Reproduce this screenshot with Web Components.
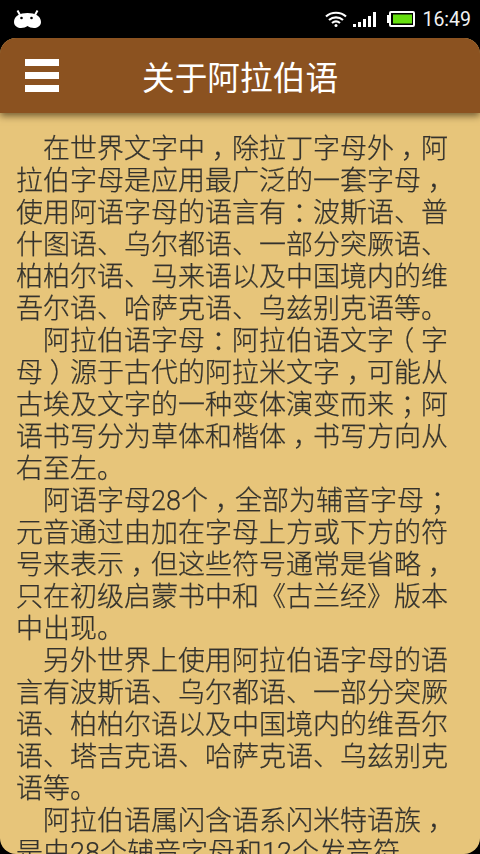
<!DOCTYPE html>
<html lang="zh-CN">
<head>
<meta charset="utf-8">
<style>
  html, body { margin: 0; height: 100%; background: #000; overflow: hidden; }
</style>
</head>
<body>
<about-page>
  <status-bar slot="status" time="16:49"></status-bar>
  <title-bar slot="title">关于阿拉伯语</title-bar>
  <text-para>在世界文字中，除拉丁字母外，阿
拉伯字母是应用最广泛的一套字母，
使用阿语字母的语言有：波斯语、普
什图语、乌尔都语、一部分突厥语、
柏柏尔语、马来语以及中国境内的维
吾尔语、哈萨克语、乌兹别克语等。</text-para>
  <text-para>阿拉伯语字母：阿拉伯语文字（字
母）源于古代的阿拉米文字，可能从
古埃及文字的一种变体演变而来；阿
语书写分为草体和楷体，书写方向从
右至左。</text-para>
  <text-para>阿语字母28个，全部为辅音字母；
元音通过由加在字母上方或下方的符
号来表示，但这些符号通常是省略，
只在初级启蒙书中和《古兰经》版本
中出现。</text-para>
  <text-para>另外世界上使用阿拉伯语字母的语
言有波斯语、乌尔都语、一部分突厥
语、柏柏尔语以及中国境内的维吾尔
语、塔吉克语、哈萨克语、乌兹别克
语等。</text-para>
  <text-para>阿拉伯语属闪含语系闪米特语族，
是由28个辅音字母和12个发音符</text-para>
</about-page>
<script>
  class AboutPage extends HTMLElement {
    constructor() {
      super();
      this.attachShadow({ mode: 'open' }).innerHTML = `
        <style>
          :host { display: flex; flex-direction: column; height: 854px; background: #000; }
          .card { flex: 1; min-height: 0; display: flex; flex-direction: column; overflow: hidden;
            background: #e7c57a; border-radius: 16px; }
          .body { flex: 1; min-height: 0; overflow: hidden; padding: 20px 12px 0 16px; }
        </style>
        <slot name="status"></slot>
        <div class="card">
          <slot name="title"></slot>
          <div class="body"><slot></slot></div>
        </div>`;
    }
  }

  class StatusBar extends HTMLElement {
    constructor() {
      super();
      this.attachShadow({ mode: 'open' }).innerHTML = `
        <style>
          :host { display: flex; align-items: center; justify-content: space-between; height: 38px;
            padding: 0 9px 0 14px; color: #f2f2f2; font: 19.500px Roboto, sans-serif; box-sizing: border-box; }
          .right { display: flex; align-items: center; }
          svg { display: block; }
          .wifi { margin-right: 6px; }
          .signal { margin-right: 11px; }
          .battery { margin-right: 7px; }
        </style>
        <svg width="28" height="20" viewBox="0 0 28 20">
          <path d="M0 13C0 7 6 4 13.500 4S27 7 27 13c0 4-4 6-7 6-2.500 0-5-1-6.500-2-1.500 1-4 2-6.500 2-3 0-7-2-7-6z" fill="#fff"/>
          <path d="M6 6 3.500 1.500M21 6l2.500-4.500" stroke="#fff" stroke-width="2"/>
          <circle cx="7.500" cy="9" r="1.300" fill="#000"/><circle cx="17.500" cy="9" r="1.300" fill="#000"/>
        </svg>
        <div class="right">
          <svg class="wifi" width="22" height="16" viewBox="0 0 22 16" fill="none" stroke="#fff" stroke-width="2.200">
            <path d="M1 5.500C6.500 .5 15.500 .5 21 5.500M4 9c4-3.500 10-3.500 14 0M7 12c2.500-2 5.500-2 8 0"/>
            <circle cx="11" cy="14.500" r="1.500" fill="#fff" stroke="none"/>
          </svg>
          <svg class="signal" width="23" height="15" viewBox="0 0 23 15" fill="#fff">
            <rect x="0" y="12" width="3" height="3"/><rect x="5" y="10" width="3" height="5"/>
            <rect x="10" y="7" width="3" height="8"/><rect x="15" y="4" width="3" height="11"/>
            <rect x="20" y="0" width="3" height="15"/>
          </svg>
          <svg class="battery" width="28" height="16" viewBox="0 0 28 16">
            <rect x="0" y="4" width="2" height="8" fill="#fff"/>
            <rect x="3" y="1" width="24" height="14" rx="1" fill="none" stroke="#fff" stroke-width="2"/>
            <rect x="6" y="3.500" width="19" height="9" fill="#66e010"/>
          </svg>
          <span>${this.getAttribute('time')}</span>
        </div>`;
    }
  }

  class TitleBar extends HTMLElement {
    constructor() {
      super();
      this.attachShadow({ mode: 'open' }).innerHTML = `
        <style>
          :host { display: flex; align-items: center; height: 75px; flex: none; padding-left: 25px;
            background: #8b5220; color: #fff; box-sizing: border-box; position: relative;
            box-shadow: 0 3px 7px rgba(40, 25, 5, .6);
            font: 400 32.700px "Noto Sans CJK SC", sans-serif; }
          .menu { display: flex; flex-direction: column; gap: 6px; width: 34px; margin-right: 83px; }
          .menu i { display: block; height: 7px; background: #fff; }
        </style>
        <div class="menu"><i></i><i></i><i></i></div>
        <slot></slot>`;
    }
  }

  class TextPara extends HTMLElement {
    constructor() {
      super();
      this.attachShadow({ mode: 'open' }).innerHTML = `
        <style>
          :host { display: block; color: #33322d; font: 300 27px/32px Roboto, "Noto Sans CJK SC", sans-serif;
            -webkit-text-stroke: .25px #33322d; will-change: opacity;
            text-indent: 27px; white-space: nowrap; text-spacing-trim: space-all; }
          /* the reference centres these marks in their cell: halve the glyph, then centre it */
          ::slotted(b) { display: inline-block; width: 27px; font-weight: inherit; text-indent: 0;
            text-align: center; font-feature-settings: "halt"; }
        </style>
        <slot></slot>`;
    }

    connectedCallback() {
      // one text run per line, the lines are the ones of the reference
      this.innerHTML = this.textContent.trim()
        .replace(/[，：；（）]/g, (m) => `<b>${m}</b>`)
        .replace(/\n/g, '<br>');
    }
  }

  customElements.define('about-page', AboutPage);
  customElements.define('status-bar', StatusBar);
  customElements.define('title-bar', TitleBar);
  customElements.define('text-para', TextPara);
</script>
</body>
</html>
